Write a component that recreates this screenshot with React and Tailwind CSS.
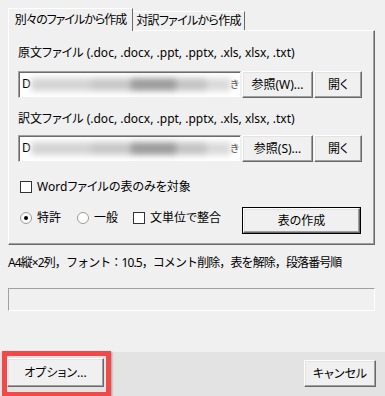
import React from "react";

const raised =
  "border border-t-white border-l-white border-r-[#696969] border-b-[#696969] shadow-[inset_-1px_-1px_0_#a0a0a0,inset_1px_1px_0_#e3e3e3]";

function Btn({ children, className = "" }) {
  return (
    <div
      className={`flex items-center justify-center whitespace-nowrap bg-[#f0f0f0] ${raised} ${className}`}
    >
      {children}
    </div>
  );
}

function BlurInput() {
  return (
    <div className="relative h-[27px] w-[223px] overflow-hidden bg-white border border-t-[#a0a0a0] border-l-[#a0a0a0] border-r-[#f0f0f0] border-b-[#f0f0f0] shadow-[inset_1px_1px_0_#696969]">
      <span className="absolute left-[3px] top-[4px] leading-4">D</span>
      <div className="absolute left-[12px] top-[6px] h-[13px] w-[200px] flex blur-[3px]">
        <div className="w-[60px] bg-[#d4d4d4]" />
        <div className="w-[40px] bg-[#c8c8c8]" />
        <div className="w-[45px] bg-[#9c9c9c]" />
        <div className="w-[30px] bg-[#c4c4c4]" />
        <div className="w-[25px] bg-[#dadada]" />
      </div>
      <span className="absolute right-[1px] top-[4px] leading-4 text-[10px] text-[#555]">き</span>
    </div>
  );
}

function Check({ label, className = "" }) {
  return (
    <div className={`flex items-center gap-[5px] ${className}`}>
      <div className="w-[12px] h-[12px] bg-white border border-[#333]" />
      <span className="whitespace-nowrap">{label}</span>
    </div>
  );
}

function Radio({ label, checked, className = "" }) {
  return (
    <div className={`flex items-center gap-[5px] ${className}`}>
      <div className="w-[12px] h-[12px] rounded-full bg-white border border-[#9a9a9a] flex items-center justify-center">
        {checked && <div className="w-[4px] h-[4px] rounded-full bg-black" />}
      </div>
      <span className="whitespace-nowrap">{label}</span>
    </div>
  );
}

export default function App() {
  return (
    <div
      className="w-[385px] h-[396px] bg-[#f0f0f0] flex flex-col text-[12px] leading-4 text-black overflow-hidden [font-feature-settings:'palt']"
      style={{ fontFamily: '"Noto Sans", "Noto Sans CJK JP", sans-serif' }}
    >
      <div className="px-[8px] pt-[8px]">
        <div className="flex items-end h-[22px]">
          <div className="relative z-10 h-[23px] w-[125px] -mb-px bg-[#f0f0f0] border-t border-l border-white border-r border-r-[#696969] flex items-start justify-center pt-[3px] whitespace-nowrap tracking-[-1px]">
            別々のファイルから作成
          </div>
          <div className="h-[19px] w-[112px] bg-[#f0f0f0] border-t border-white border-r border-r-[#696969] flex items-start justify-center pt-[1px] whitespace-nowrap tracking-[-0.7px]">
            対訳ファイルから作成
          </div>
        </div>
        <div className="h-[215px] w-[367px] border border-t-white border-l-white border-r-[#696969] border-b-[#696969] shadow-[inset_-1px_-1px_0_#a0a0a0] pl-[9px] pt-[14px]">
          <div>原文ファイル (.doc, .docx, .ppt, .pptx, .xls, xlsx, .txt)</div>
          <div className="flex mt-[10px]">
            <BlurInput />
            <Btn className="ml-px h-[27px] w-[71px]">参照(W)...</Btn>
            <Btn className="ml-px h-[27px] w-[48px]">開く</Btn>
          </div>
          <div className="mt-[13px]">訳文ファイル (.doc, .docx, .ppt, .pptx, .xls, xlsx, .txt)</div>
          <div className="flex mt-[8px]">
            <BlurInput />
            <Btn className="ml-px h-[27px] w-[71px]">参照(S)...</Btn>
            <Btn className="ml-px h-[27px] w-[48px]">開く</Btn>
          </div>
          <Check label="Wordファイルの表のみを対象" className="mt-[17px] pl-[2px]" />
          <div className="flex items-start mt-[12px]">
            <div className="flex items-center mt-[3px] pl-[2px] w-[224px]">
              <Radio label="特許" checked className="w-[57px]" />
              <Radio label="一般" className="w-[56px]" />
              <Check label="文単位で整合" />
            </div>
            <div className="h-[27px] w-[119px] border border-black">
              <Btn className="h-full w-full">表の作成</Btn>
            </div>
          </div>
        </div>
        <div className="mt-[10px] whitespace-nowrap tracking-[-0.9px] [font-feature-settings:normal]">
          A4縦×2列，フォント：10.5，コメント削除，表を解除，段落番号順
        </div>
        <div className="mt-[17px] h-[23px] w-[367px] bg-[#f0f0f0] border border-t-[#a0a0a0] border-l-[#a0a0a0] border-r-white border-b-white" />
      </div>
      <div className="mt-auto h-[44px] bg-[#e3e3e3] flex items-start justify-between pl-[2px] pr-[9px]">
        <div className="border-[5px] border-[#f24848] h-[46px] w-[109px] -mt-px shadow-[1px_1px_2px_rgba(0,0,0,0.3)]">
          <Btn className="h-[29px] w-[97px] mt-[2px]">オプション...</Btn>
        </div>
        <Btn className="h-[27px] w-[72px] mt-[8px]">キャンセル</Btn>
      </div>
    </div>
  );
}
